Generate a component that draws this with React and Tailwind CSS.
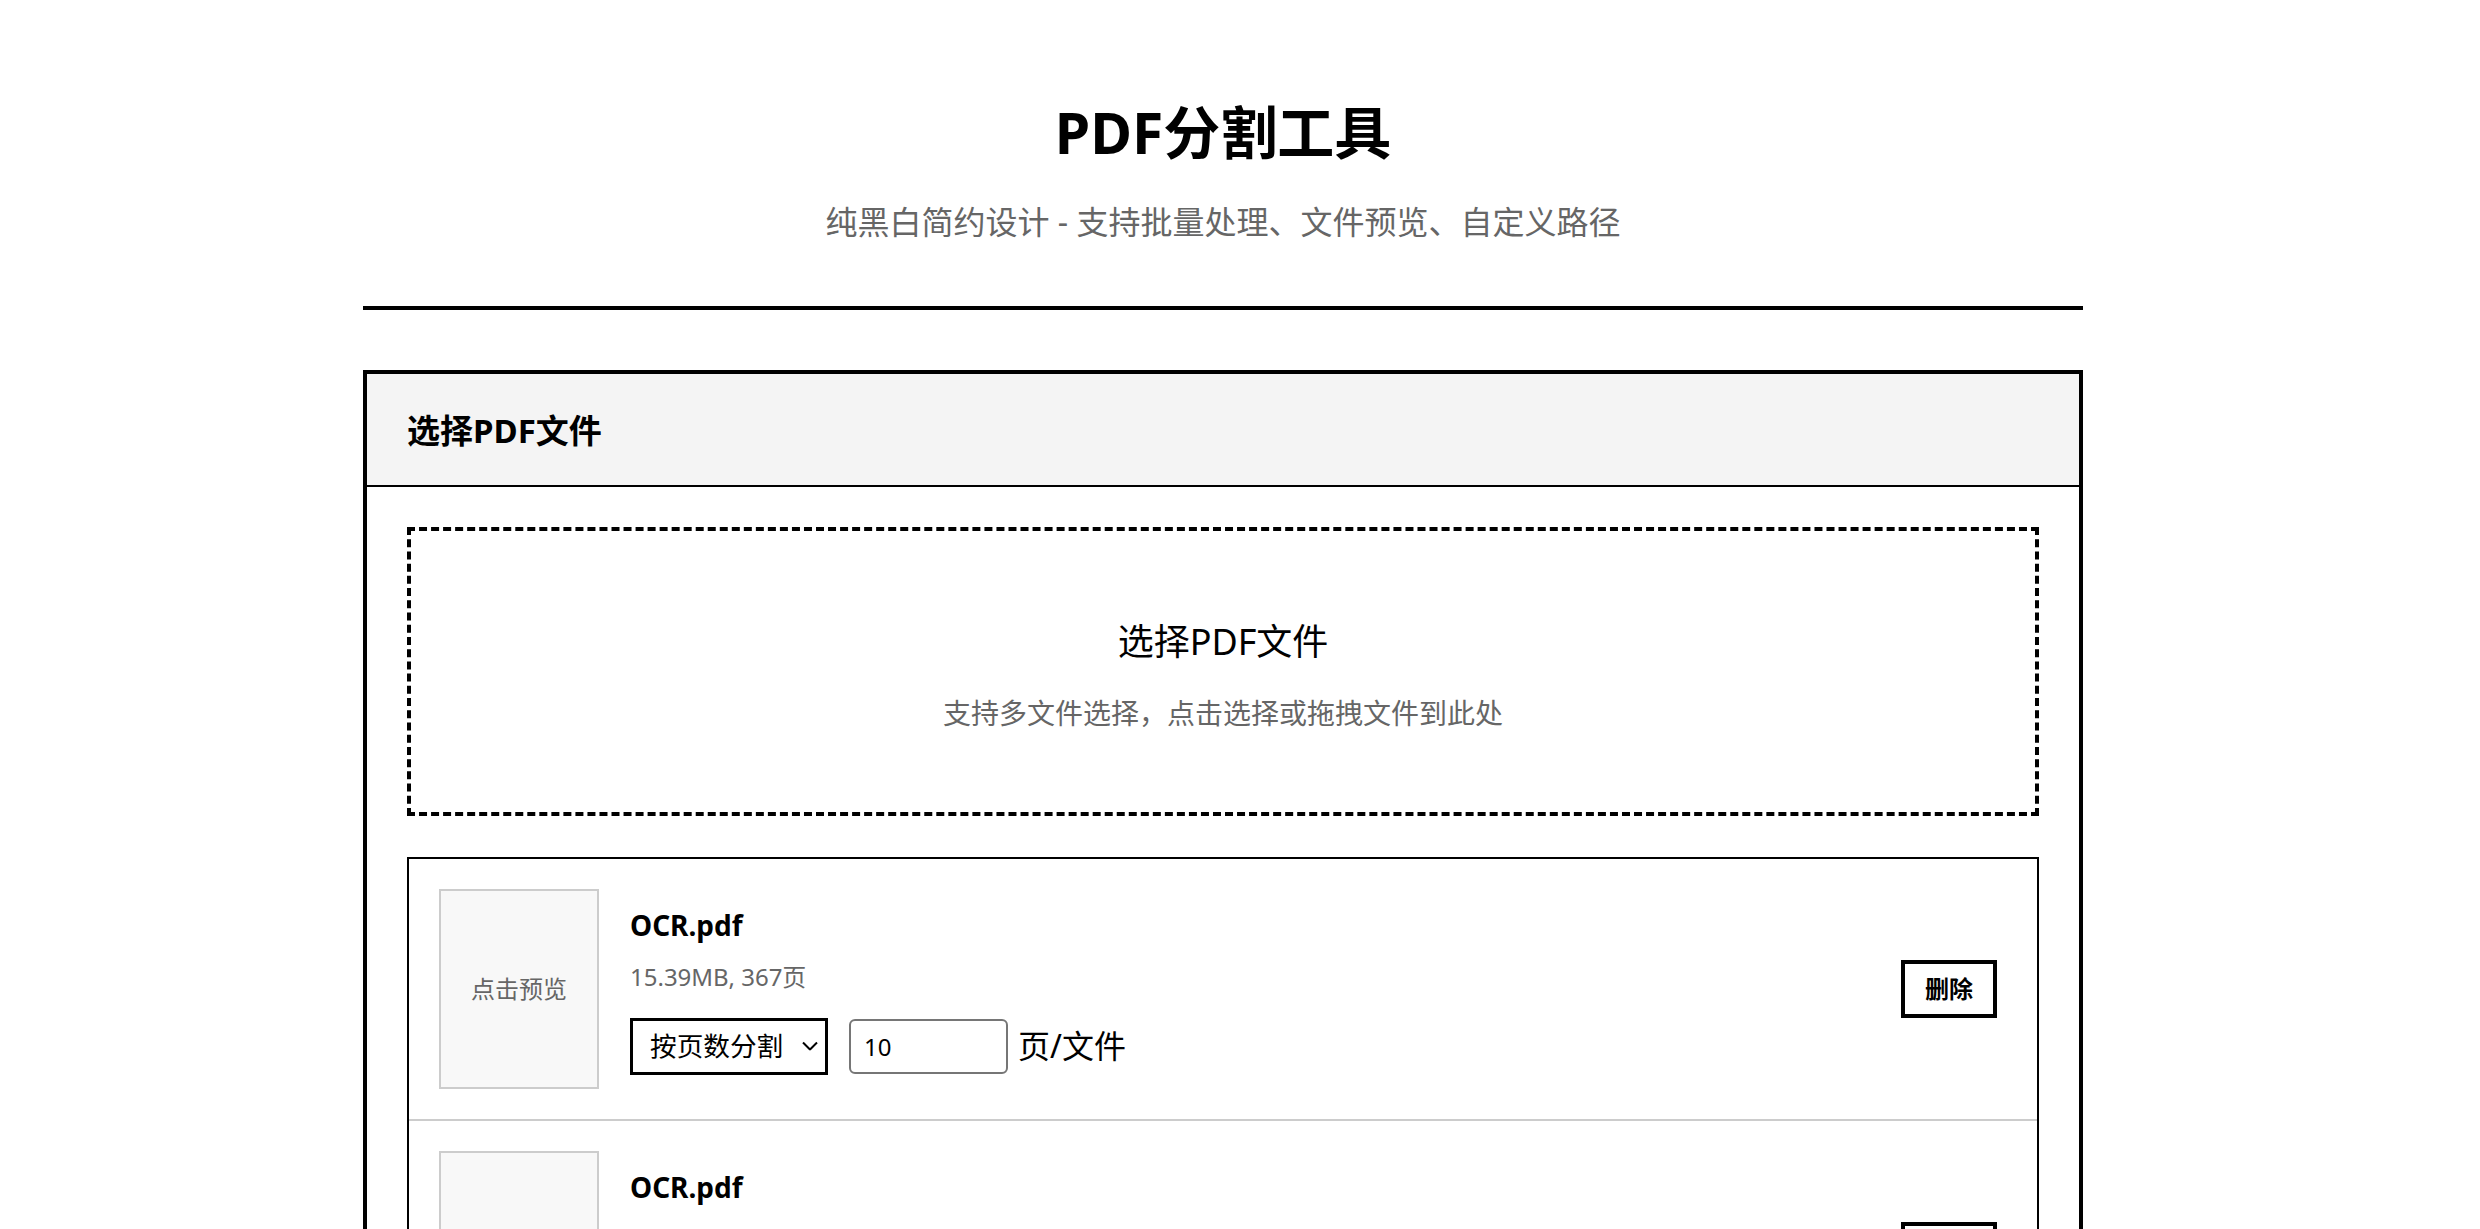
import { useState } from 'react';

const initialFiles = [
  { id: 1, name: 'OCR.pdf', size: '15.39MB', pages: 367, mode: 'pages', perFile: '10' },
  { id: 2, name: 'OCR.pdf', size: '15.39MB', pages: 367, mode: 'pages', perFile: '10' },
];

const FileRow = ({ file, onRemove, onChange }) => {
  return (
    <div className="flex items-center pl-[30px] pr-[40px] py-[30px] border-b-2 border-[#ccc] last:border-b-0">
      <div className="w-[160px] h-[200px] shrink-0 border-2 border-[#ccc] bg-[#f8f8f8] flex items-center justify-center text-[24px] text-[#666] cursor-pointer">
        点击预览
      </div>

      <div className="ml-[31px] mt-[7px] flex-1">
        <div className="text-[28px] font-bold leading-none">{file.name}</div>
        <div className="mt-[26px] text-[24px] leading-none text-[#666]">
          {file.size}, {file.pages}页
        </div>
        <div className="mt-[29px] flex items-center">
          <div className="relative">
            <select
              value={file.mode}
              onChange={(e) => onChange(file.id, { mode: e.target.value })}
              className="appearance-none w-[198px] h-[57px] border-[3px] border-black rounded-none bg-white pl-[17px] text-[26.67px] leading-none text-black outline-none"
            >
              <option value="pages">按页数分割</option>
              <option value="range">按范围分割</option>
            </select>
            <svg
              className="pointer-events-none absolute right-[10px] top-1/2 -translate-y-1/2"
              width="16"
              height="9"
              viewBox="0 0 16 9"
              fill="none"
            >
              <polyline points="1,1 8,8 15,1" stroke="#000" strokeWidth="2" />
            </svg>
          </div>
          <input
            value={file.perFile}
            onChange={(e) => onChange(file.id, { perFile: e.target.value })}
            className="ml-[21px] w-[159px] h-[55px] border-2 border-[#767676] rounded-[6px] pl-[13px] text-[24px] text-black outline-none"
          />
          <span className="ml-[10px] text-[32px] leading-none">页/文件</span>
        </div>
      </div>

      <button
        onClick={() => onRemove(file.id)}
        className="w-[96px] h-[58px] shrink-0 border-4 border-black bg-white text-[24px] font-bold leading-none"
      >
        删除
      </button>
    </div>
  );
};

const App = () => {
  const [files, setFiles] = useState(initialFiles);

  const removeFile = (id) => setFiles((prev) => prev.filter((f) => f.id !== id));
  const updateFile = (id, patch) =>
    setFiles((prev) => prev.map((f) => (f.id === id ? { ...f, ...patch } : f)));

  return (
    <div className="min-h-screen bg-white text-black font-['Noto_Sans','Noto_Sans_CJK_SC',sans-serif]">
      {/* original layout had a 34px scrollbar, so content is centred on 2446px */}
      <div className="pr-[34px]">
        <div className="mx-auto w-[1720px] pb-[80px]">
          <header className="pt-[104px] pb-[68px] border-b-4 border-black text-center">
            <h1 className="text-[57px] font-bold leading-none">PDF分割工具</h1>
            <p className="mt-[45px] text-[32px] leading-none text-[#666]">
              纯黑白简约设计 - 支持批量处理、文件预览、自定义路径
            </p>
          </header>

          <section className="mt-[60px] border-4 border-black">
            <div className="bg-[#f4f4f4] border-b-2 border-black px-[40px] pt-[40px] pb-[38px]">
              <h2 className="text-[33px] font-bold leading-none">选择PDF文件</h2>
            </div>

            <div className="p-[40px]">
              <div className="border-4 border-dashed border-black pt-[93px] pb-[85px] text-center cursor-pointer">
                <div className="text-[36px] leading-none">选择PDF文件</div>
                <div className="mt-[39px] text-[28px] leading-none text-[#666]">
                  支持多文件选择，点击选择或拖拽文件到此处
                </div>
              </div>

              {files.length > 0 && (
                <div className="mt-[41px] border-2 border-black">
                  {files.map((file) => (
                    <FileRow key={file.id} file={file} onRemove={removeFile} onChange={updateFile} />
                  ))}
                </div>
              )}
            </div>
          </section>
        </div>
      </div>
    </div>
  );
};

export default App;
